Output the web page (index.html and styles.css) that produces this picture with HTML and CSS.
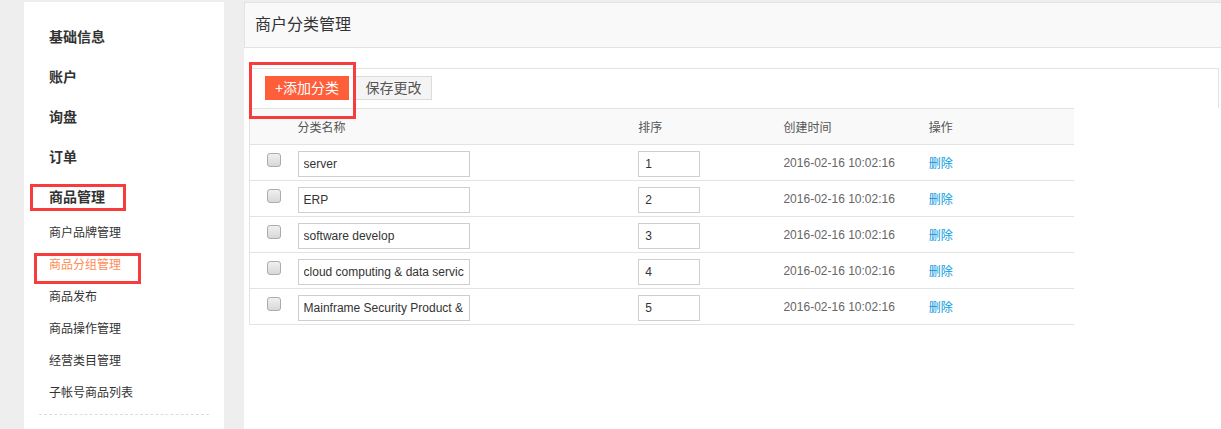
FILE: index.html
```html
<!DOCTYPE html>
<html lang="zh-CN">
<head>
<meta charset="utf-8">
<title>商户分类管理</title>
<link rel="stylesheet" href="styles.css">
</head>
<body>
<div class="layout">
  <aside class="sidebar">
    <ul class="nav">
      <li class="nav-group">基础信息</li>
      <li class="nav-group">账户</li>
      <li class="nav-group">询盘</li>
      <li class="nav-group">订单</li>
      <li class="nav-group marked-group">商品管理<span class="mark mark-group"></span></li>
      <li class="nav-item">商户品牌管理</li>
      <li class="nav-item active">商品分组管理<span class="mark mark-item"></span></li>
      <li class="nav-item">商品发布</li>
      <li class="nav-item">商品操作管理</li>
      <li class="nav-item">经营类目管理</li>
      <li class="nav-item">子帐号商品列表</li>
    </ul>
    <div class="divider"></div>
  </aside>
  <main class="main">
    <div class="page-head">商户分类管理</div>
    <div class="content">
      <div class="toolbar">
        <button class="btn btn-primary">+添加分类</button>
        <button class="btn btn-default">保存更改</button>
        <span class="mark mark-toolbar"></span>
      </div>
      <table class="grid">
        <colgroup>
          <col class="c-check"><col class="c-name"><col class="c-sort"><col class="c-time"><col class="c-op">
        </colgroup>
        <thead>
          <tr><th></th><th>分类名称</th><th>排序</th><th>创建时间</th><th>操作</th></tr>
        </thead>
        <tbody>
          <tr>
            <td class="td-check"><span class="check"></span></td>
            <td><input class="in in-name" type="text" value="server"></td>
            <td><input class="in in-sort" type="text" value="1"></td>
            <td class="time">2016-02-16 10:02:16</td>
            <td><a class="del" href="#">删除</a></td>
          </tr>
          <tr>
            <td class="td-check"><span class="check"></span></td>
            <td><input class="in in-name" type="text" value="ERP"></td>
            <td><input class="in in-sort" type="text" value="2"></td>
            <td class="time">2016-02-16 10:02:16</td>
            <td><a class="del" href="#">删除</a></td>
          </tr>
          <tr>
            <td class="td-check"><span class="check"></span></td>
            <td><input class="in in-name" type="text" value="software develop"></td>
            <td><input class="in in-sort" type="text" value="3"></td>
            <td class="time">2016-02-16 10:02:16</td>
            <td><a class="del" href="#">删除</a></td>
          </tr>
          <tr>
            <td class="td-check"><span class="check"></span></td>
            <td><input class="in in-name" type="text" value="cloud computing &amp; data service"></td>
            <td><input class="in in-sort" type="text" value="4"></td>
            <td class="time">2016-02-16 10:02:16</td>
            <td><a class="del" href="#">删除</a></td>
          </tr>
          <tr>
            <td class="td-check"><span class="check"></span></td>
            <td><input class="in in-name" type="text" value="Mainframe Security Product &amp; Service"></td>
            <td><input class="in in-sort" type="text" value="5"></td>
            <td class="time">2016-02-16 10:02:16</td>
            <td><a class="del" href="#">删除</a></td>
          </tr>
        </tbody>
      </table>
    </div>
  </main>
</div>
</body>
</html>
```
FILE: styles.css
```css
* { box-sizing: border-box; }
html, body { height: 100%; }
body {
  margin: 0;
  background: #eeeeee;
  font-family: "Liberation Sans", "Noto Sans CJK SC", sans-serif;
  color: #333;
  overflow: hidden;
}
.layout {
  display: flex;
  align-items: stretch;
  padding-top: 2px;
  min-height: 100%;
}
.sidebar {
  width: 200px;
  margin-left: 24px;
  background: #fff;
  padding-top: 15px;
  flex: none;
  min-height: 427px;
}
.nav {
  list-style: none;
  margin: 0;
  padding: 0 0 0 25px;
}
.nav li { position: relative; }
.nav-group {
  height: 40px;
  line-height: 40px;
  font-size: 14px;
  font-weight: bold;
  color: #333;
}
.nav-item {
  height: 32px;
  line-height: 33px;
  font-size: 12px;
  color: #333;
}
.nav-item.active { color: #ff8b55; }
.divider {
  margin: 5px 15px 0;
  border-top: 1px dashed #dcdcdc;
}
.mark {
  position: absolute;
  border: 3px solid #f63c3c;
  pointer-events: none;
}
.mark-group { left: -19px; top: 7px; width: 96px; height: 27px; }
.mark-item { left: -15px; top: 4px; width: 107px; height: 31px; }

.main {
  flex: 1;
  margin-left: 20px;
  background: #fff;
}
.page-head {
  height: 46px;
  line-height: 44px;
  padding-left: 10px;
  background: #f9f9f9;
  border: 1px solid #e3e3e3;
  border-right: 0;
  font-size: 16px;
  color: #333;
}
.content {
  padding: 20px 2px 0 5px;
}
.toolbar {
  position: relative;
  height: 40px;
  border: 1px solid #e3e3e3;
  border-bottom: 0;
  padding: 7px 0 0 15px;
  display: flex;
  gap: 6px;
  align-items: flex-start;
}
.mark-toolbar { left: -1px; top: -7px; width: 107px; height: 57px; }
.btn {
  height: 24px;
  padding: 0;
  font-family: inherit;
  font-size: 14px;
  line-height: 22px;
  cursor: pointer;
}
.btn-primary {
  width: 84px;
  background: #ff5e3a;
  color: #fff;
  border: 1px solid #ff5e3a;
}
.btn-default {
  width: 77px;
  background: #f4f4f4;
  color: #555;
  border: 1px solid #dcdcdc;
}
.grid {
  width: 825px;
  border-collapse: collapse;
  table-layout: fixed;
  font-size: 12px;
  border-left: 1px solid #e3e3e3;
  border-top: 1px solid #e3e3e3;
}
.c-check { width: 48px; }
.c-name { width: 340px; }
.c-sort { width: 145px; }
.c-time { width: 145px; }
.c-op { width: 145px; }
.grid th {
  height: 36px;
  background: #f9f9f9;
  font-weight: normal;
  color: #555;
  text-align: left;
  padding: 0;
  border-bottom: 1px solid #e3e3e3;
  vertical-align: middle;
}
.grid td {
  height: 36px;
  padding: 0;
  border-bottom: 1px solid #e3e3e3;
  vertical-align: middle;
}
.td-check { padding-left: 0; }
.check {
  display: block;
  margin: -6px 0 0 17px;
  width: 14px;
  height: 14px;
  border: 1px solid #ababab;
  border-radius: 3px;
  background: linear-gradient(#f0f0f0, #d8d8d8);
}
.in {
  display: block;
  height: 26px;
  margin-top: 2px;
  border: 1px solid #cfcfcf;
  padding: 0 5px;
  font-family: "Liberation Sans", sans-serif;
  font-size: 12px;
  color: #333;
  background: #fff;
  outline: none;
}
.in-name { width: 172px; }
.in-sort { width: 62px; padding-left: 6px; }
.time { color: #666; }
.del { color: #0a9ade; text-decoration: none; }
```
